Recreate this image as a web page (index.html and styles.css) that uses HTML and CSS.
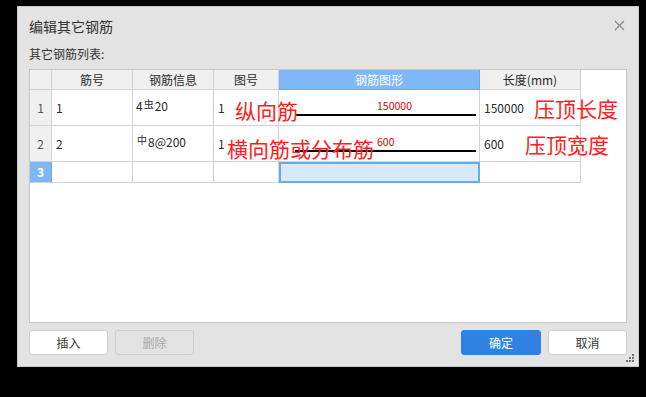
FILE: index.html
```html
<!DOCTYPE html>
<html lang="zh-CN">
<head>
  <meta charset="UTF-8" />
  <title>编辑其它钢筋</title>
  <link rel="stylesheet" href="styles.css">
</head>
<body>
  <div class="dialog">
    <div class="title-bar">
      <span class="title">编辑其它钢筋</span>
      <svg class="close" width="11" height="11" viewBox="0 0 11 11">
        <path d="M1 1 L10 10 M10 1 L1 10" stroke="#8a8a8a" stroke-width="1.3" fill="none"/>
      </svg>
    </div>

    <div class="list-label">其它钢筋列表:</div>

    <div class="grid-box">
      <div class="grid">
        <div class="cell corner"></div>
        <div class="cell head">筋号</div>
        <div class="cell head">钢筋信息</div>
        <div class="cell head">图号</div>
        <div class="cell head head-active">钢筋图形</div>
        <div class="cell head">长度(mm)</div>

        <div class="cell row-head">1</div>
        <div class="cell">1</div>
        <div class="cell info">4<span class="sym">虫</span>20</div>
        <div class="cell">1</div>
        <div class="cell shape">
          <div class="shape-num">150000</div>
          <div class="shape-line"></div>
        </div>
        <div class="cell">150000</div>

        <div class="cell row-head">2</div>
        <div class="cell">2</div>
        <div class="cell info"><span class="sym">中</span>8@200</div>
        <div class="cell">1</div>
        <div class="cell shape">
          <div class="shape-num">600</div>
          <div class="shape-line"></div>
        </div>
        <div class="cell">600</div>

        <div class="cell row-head row-active">3</div>
        <div class="cell"></div>
        <div class="cell"></div>
        <div class="cell"></div>
        <div class="cell cell-active"></div>
        <div class="cell"></div>
      </div>

      <!-- hand-written notes over the grid -->
      <span class="note note-1">纵向筋</span>
      <span class="note note-2">压顶长度</span>
      <span class="note note-3">横向筋或分布筋</span>
      <span class="note note-4">压顶宽度</span>
    </div>

    <div class="button-row">
      <button class="btn">插入</button>
      <button class="btn btn-disabled">删除</button>
      <div class="spacer"></div>
      <button class="btn btn-primary">确定</button>
      <button class="btn">取消</button>
    </div>

    <svg class="grip" width="9" height="9" viewBox="0 0 9 9">
      <rect x="6" y="0" width="2" height="2" fill="#6f6f6f"/>
      <rect x="3" y="3" width="2" height="2" fill="#6f6f6f"/>
      <rect x="6" y="3" width="2" height="2" fill="#6f6f6f"/>
      <rect x="0" y="6" width="2" height="2" fill="#6f6f6f"/>
      <rect x="3" y="6" width="2" height="2" fill="#6f6f6f"/>
      <rect x="6" y="6" width="2" height="2" fill="#6f6f6f"/>
    </svg>
  </div>
</body>
</html>
```

FILE: styles.css
```css
* {
  box-sizing: border-box;
  margin: 0;
  padding: 0;
}

body {
  background-color: #000;
  font-family: "Noto Sans CJK SC", "Noto Sans", sans-serif;
  color: #333;
  width: 646px;
  height: 397px;
  overflow: hidden;
}

.dialog {
  position: relative;
  margin: 6px 0 0 17px;
  width: 622px;
  height: 361px;
  background-color: #e3e3e3;
  border: 1px solid #c9c9c9;
  padding: 0 11px 0 11px;
  display: flex;
  flex-direction: column;
}

.title-bar {
  height: 37px;
  display: flex;
  align-items: center;
  justify-content: space-between;
}

.title {
  font-size: 14px;
  line-height: 20px;
  color: #333;
}

.close {
  margin-right: 2px;
}

.list-label {
  font-size: 12px;
  line-height: 20px;
  height: 20px;
  margin-bottom: 5px;
  color: #333;
}

.grid-box {
  position: relative;
  height: 254px;
  background-color: #fff;
  border: 1px solid #c6c6c6;
}

.grid {
  display: grid;
  grid-template-columns: 22px 81px 81px 65px 201px 101px;
  grid-template-rows: 20px 36px 36px 21px;
  width: 551px;
}

.cell {
  border-right: 1px solid #d2d2d2;
  border-bottom: 1px solid #d2d2d2;
  font-size: 12px;
  line-height: 16px;
  padding-left: 4px;
  display: flex;
  align-items: center;
  white-space: nowrap;
  color: #2a2a2a;
}

.corner,
.head,
.row-head {
  background-color: #f0f0f0;
}

.head {
  justify-content: center;
  padding-left: 0;
}

.head-active {
  background-color: #80b8f5;
  color: #fff;
  border-right-color: #6aa8ea;
  border-bottom-color: #6aa8ea;
}

.row-head {
  justify-content: center;
  padding-left: 0;
  color: #555;
}

.row-active {
  background-color: #7fb7f4;
  color: #fff;
  font-weight: bold;
  border-right-color: #6aa8ea;
}

.cell-active {
  background-color: #d6e9fd;
  border: 2px solid #6aaae8;
}

.info {
  padding-left: 3px;
  padding-bottom: 3px;
}

.sym {
  font-size: 10px;
  position: relative;
  top: -2px;
  margin: 0 1px;
}

.shape {
  flex-direction: column;
  align-items: stretch;
  padding: 10px 3px 0 16px;
}

.shape-num {
  font-size: 10.5px;
  line-height: 12px;
  color: #e00000;
  padding-left: 82px;
}

.shape-line {
  margin-top: 2px;
  height: 2px;
  background-color: #000;
}

.note {
  position: absolute;
  font-size: 21px;
  line-height: 24px;
  color: #ff2020;
  white-space: nowrap;
}

.note-1 { left: 205px; top: 28px; }
.note-2 { left: 504px; top: 26px; }
.note-3 { left: 197px; top: 66px; }
.note-4 { left: 495px; top: 62px; }

.button-row {
  display: flex;
  gap: 7px;
  margin-top: 7px;
  height: 25px;
}

.spacer {
  flex: 1;
}

.btn {
  width: 79px;
  height: 25px;
  border: 1px solid #cdcdcd;
  border-radius: 3px;
  background-color: #fff;
  font-family: "Noto Sans CJK SC", sans-serif;
  font-size: 12px;
  color: #333;
}

.btn-disabled {
  background-color: #e3e3e3;
  color: #a8a8a8;
}

.btn-primary {
  width: 80px;
  background-color: #2f82e1;
  border-color: #2f82e1;
  color: #fff;
}

.grip {
  position: absolute;
  right: 3px;
  bottom: 3px;
}
```
